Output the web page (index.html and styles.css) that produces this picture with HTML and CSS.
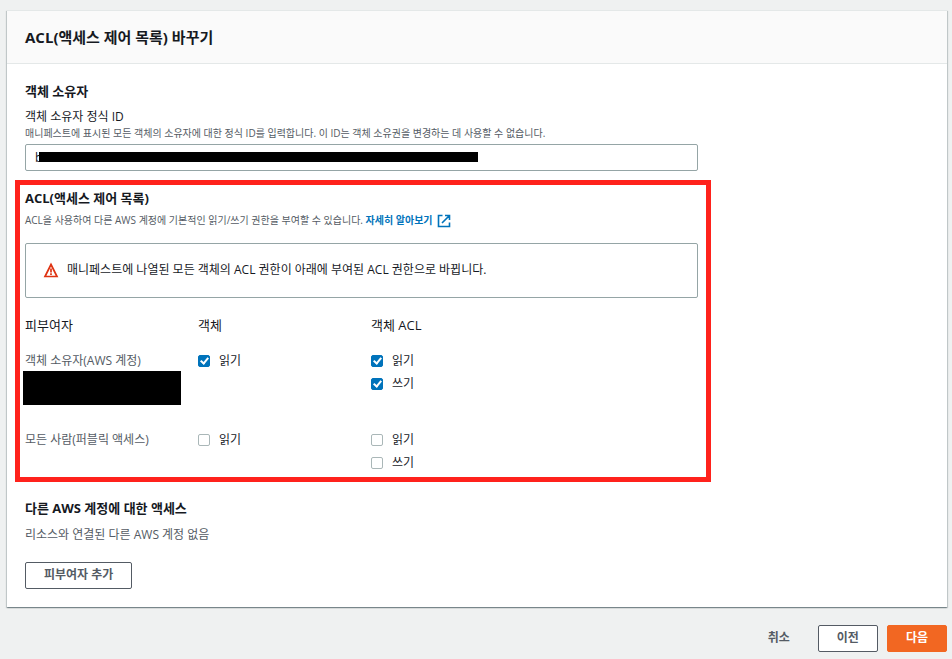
FILE: index.html
```html
<!DOCTYPE html>
<html lang="ko">
<head>
<meta charset="utf-8">
<meta name="viewport" content="width=device-width, initial-scale=1">
<title>ACL(액세스 제어 목록) 바꾸기</title>
<link rel="stylesheet" href="styles.css">
</head>
<body>
<form class="page">
  <section class="card">
    <header class="card-header">
      <h1>ACL(액세스 제어 목록) 바꾸기</h1>
    </header>
    <div class="card-body">
      <section class="owner">
        <h2>객체 소유자</h2>
        <label class="field-label" for="owner-id">객체 소유자 정식 ID</label>
        <p class="hint" id="owner-hint">매니페스트에 표시된 모든 객체의 소유자에 대한 정식 ID를 입력합니다. 이 ID는 객체 소유권을 변경하는 데 사용할 수 없습니다.</p>
        <div class="field">
          <input type="text" id="owner-id" value="b" aria-describedby="owner-hint">
          <span class="field-mask"></span>
        </div>
      </section>

      <section class="acl">
        <h2>ACL(액세스 제어 목록)</h2>
        <p class="hint">ACL을 사용하여 다른 AWS 계정에 기본적인 읽기/쓰기 권한을 부여할 수 있습니다. <a href="#">자세히 알아보기<svg class="external" viewBox="0 0 14 14" aria-hidden="true"><path d="M5.500 1.500h-4v11h11v-4M8 1.500h4.500V6M12.500 1.500 5 9"/></svg></a></p>
        <div class="alert">
          <svg class="warning" viewBox="0 0 16 16" aria-hidden="true"><path d="M8 2.500 14 14.500H2z"/><path d="M8 6.500v4M8 11.300v1.700"/></svg>
          <span>매니페스트에 나열된 모든 객체의 ACL 권한이 아래에 부여된 ACL 권한으로 바뀝니다.</span>
        </div>
        <table class="grants">
          <colgroup><col class="col-narrow"><col class="col-narrow"><col></colgroup>
          <thead>
            <tr><th scope="col">피부여자</th><th scope="col">객체</th><th scope="col">객체 ACL</th></tr>
          </thead>
          <tbody>
            <tr>
              <th scope="row">객체 소유자(AWS 계정)<span class="id-mask"></span></th>
              <td><label class="check"><input type="checkbox" checked>읽기</label></td>
              <td>
                <label class="check"><input type="checkbox" checked>읽기</label>
                <label class="check"><input type="checkbox" checked>쓰기</label>
              </td>
            </tr>
            <tr>
              <th scope="row">모든 사람(퍼블릭 액세스)</th>
              <td><label class="check"><input type="checkbox">읽기</label></td>
              <td>
                <label class="check"><input type="checkbox">읽기</label>
                <label class="check"><input type="checkbox">쓰기</label>
              </td>
            </tr>
          </tbody>
        </table>
      </section>

      <section class="others">
        <h2>다른 AWS 계정에 대한 액세스</h2>
        <p class="empty">리소스와 연결된 다른 AWS 계정 없음</p>
        <button type="button" class="btn">피부여자 추가</button>
      </section>
    </div>
  </section>
  <footer class="actions">
    <button type="button" class="btn btn-link">취소</button>
    <button type="button" class="btn">이전</button>
    <button type="submit" class="btn btn-primary">다음</button>
  </footer>
</form>
</body>
</html>
```
FILE: styles.css
```css
*, *::before, *::after { box-sizing: border-box; }

body {
  margin: 0;
  background: #eff1f1;
  color: #16191f;
  font: 12px/18px "Open Sans", "Noto Sans CJK KR", sans-serif;
}

h1, h2, p { margin: 0; }
h1 { font-size: 15px; line-height: 20px; }
h2 { font-size: 13px; line-height: 18px; }

input, button { font: inherit; color: inherit; }

.page { padding: 10px 5px 7px 7px; }

.card {
  background: #fff;
  border-top: 1px solid #e4e8e8;
  box-shadow: 0 1px 1px rgba(0, 28, 36, .3), 1px 1px 1px rgba(0, 28, 36, .15), -1px 1px 1px rgba(0, 28, 36, .15);
}

.card-header {
  padding: 16px 18px;
  background: #fafafa;
  border-bottom: 1px solid #e4e8e8;
}

.card-body { padding: 18px; }

.owner, .acl { width: calc(75% - 5px); }

.field-label { display: block; margin-top: 8px; }

.hint {
  color: #545b64;
  font-size: 10px;
  line-height: 14px;
}

.field { position: relative; margin-top: 4px; }

.field input {
  display: block;
  width: 100%;
  height: 27px;
  padding: 0 9px;
  background: #fff;
  border: 1px solid #95a5a6;
  border-radius: 2px;
}

.field-mask {
  position: absolute;
  left: 14px;
  top: 8px;
  width: 439px;
  height: 10px;
  background: #000;
}

.acl { position: relative; margin-top: 18px; }

.acl::after {
  content: "";
  position: absolute;
  inset: -9px -13px -10px -10px;
  border: 5px solid #ff221c;
  pointer-events: none;
}

.acl .hint { margin-top: 6px; }

.hint a { color: #0073bb; font-weight: 700; text-decoration: none; }

.external {
  width: 14px;
  height: 14px;
  margin-left: 4px;
  vertical-align: middle;
  fill: none;
  stroke: currentColor;
  stroke-width: 1.6;
}

.alert {
  display: flex;
  align-items: center;
  gap: 8px;
  margin-top: 15px;
  padding: 17px 17px 18px;
  border: 1px solid #95a5a6;
  border-radius: 2px;
}

.warning {
  width: 16px;
  height: 16px;
  flex: none;
  fill: none;
  stroke: #df3312;
  stroke-width: 1.7;
}

.grants {
  width: calc(100% + 19px);
  margin-top: 18px;
  border-collapse: collapse;
  table-layout: fixed;
}

.col-narrow { width: 25%; }

.grants th, .grants td {
  padding: 0 0 18px;
  text-align: left;
  vertical-align: top;
  font-weight: 400;
}

.grants thead th { font-size: 13px; }
.grants tbody th { color: #545b64; }
.grants tbody tr:last-child > * { padding-bottom: 0; }

.id-mask {
  display: block;
  width: 158px;
  height: 34px;
  margin: 1px 0 8px -2px;
  background: #000;
}

.check {
  display: flex;
  align-items: center;
  gap: 9px;
}

.check + .check { margin-top: 5px; }

.check input {
  appearance: none;
  width: 12px;
  height: 12px;
  margin: 0;
  background: #fff;
  border: 1px solid #aab7b8;
  border-radius: 2px;
}

.check input:checked {
  background: #0073bb;
  border-color: #0073bb;
  display: grid;
  place-items: center;
}

.check input:checked::before {
  content: "";
  width: 5px;
  height: 8px;
  margin-bottom: 2px;
  border: solid #fff;
  border-width: 0 2px 2px 0;
  transform: rotate(40deg);
}

.others { margin-top: 27px; }
.empty { margin-top: 9px; color: #545b64; }
.others .btn { margin-top: 18px; }

.btn {
  display: block;
  height: 27px;
  padding: 0 18px 2px;
  background: #fff;
  border: 1px solid #545b64;
  border-radius: 2px;
  color: #545b64;
  font-size: 12px;
  font-weight: 700;
  line-height: 18px;
}

.btn-link { background: transparent; border-color: transparent; }
.btn-primary { background: #f26722; border-color: #f26722; color: #fff; }

.actions {
  display: flex;
  justify-content: flex-end;
  gap: 9px;
  margin-top: 18px;
}
```
